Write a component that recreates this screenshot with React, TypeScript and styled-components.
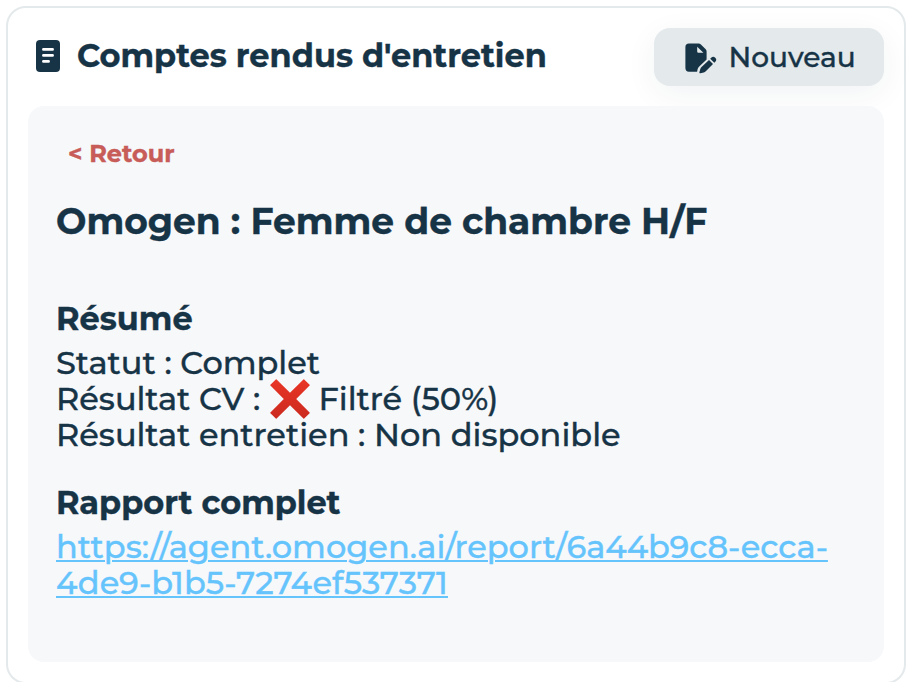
import React from "react";
import styled, { createGlobalStyle } from "styled-components";

const ink = "#173447";

const GlobalStyle = createGlobalStyle`
  *, *::before, *::after { box-sizing: border-box; }
  html, body { margin: 0; height: 100%; overflow: hidden; background: #fff; }
  body {
    font-family: Montserrat, Inter, "Liberation Sans", sans-serif;
    color: ${ink};
    -webkit-font-smoothing: antialiased;
    -webkit-text-stroke: 0.35px currentColor;
  }
`;

const Page = styled.main`
  padding: 6px 10px 0 6px;
`;

const Card = styled.section`
  height: 678px;
  padding: 20px;
  border: 2px solid #e4e9eb;
  border-radius: 20px;
  background: #fff;
  display: flex;
  flex-direction: column;
  gap: 20px;
`;

const Header = styled.header`
  display: flex;
  justify-content: space-between;
  height: 58px;
  padding-left: 8px;
`;

const TitleGroup = styled.div`
  display: flex;
  align-items: center;
  gap: 17px;
  height: 56px;
`;

const Title = styled.h1`
  margin: 0;
  font-size: 32px;
  line-height: 40px;
  font-weight: 700;
  white-space: nowrap;
`;

const NewButton = styled.button`
  display: flex;
  align-items: center;
  gap: 11.500px;
  width: 230px;
  height: 58px;
  padding: 0 0 0 31px;
  border: 0;
  border-radius: 16px;
  background: #e4e9eb;
  color: ${ink};
  font: 500 28px/34px Montserrat, Inter, sans-serif;
  box-shadow: 0 8px 32px rgba(23, 52, 71, 0.06);
  cursor: pointer;
`;

const Panel = styled.div`
  height: 556px;
  padding: 28px;
  border-radius: 16px;
  background: #f7f8fa;
`;

const BackButton = styled.button`
  display: block;
  height: 40px;
  padding: 0 12px;
  border: 0;
  background: none;
  color: #c75c58;
  font: 700 24px/40px Montserrat, Inter, sans-serif;
  cursor: pointer;
`;

const JobTitle = styled.h2`
  margin: 25px 0 58px;
  font-size: 36px;
  line-height: 44px;
  font-weight: 700;
  white-space: nowrap;
`;

const Section = styled.section`
  font-size: 32px;
  line-height: 36px;
  font-weight: 500;

  & + & { margin-top: 32px; }
`;

const SectionTitle = styled.h3`
  margin: 0 0 8px;
  font-size: 32px;
  line-height: 36px;
  font-weight: 700;
`;

const Line = styled.p`
  margin: 0;
  height: 36px;
  white-space: nowrap;
`;

const ReportLink = styled.a`
  color: #66c4fd;
  text-decoration: underline;
  text-decoration-thickness: 2px;
  text-underline-offset: 2px;
`;

const Cross = styled.svg`
  display: inline-block;
  width: 40px;
  height: 40px;
  margin: -10px 0 -10px 1px;
  vertical-align: 1px;
`;

function ReportIcon() {
  return (
    <svg width="24" height="32" viewBox="0 0 24 32" aria-hidden="true">
      <rect width="24" height="32" rx="4" fill={ink} />
      <path d="M7.4 9.4h9.2M7.4 15.4h9.2M7.4 21.4h5.2" stroke="#fff" strokeWidth="2.7" strokeLinecap="round" />
    </svg>
  );
}

function EditFileIcon() {
  return (
    <svg width="32" height="34" viewBox="0 -2.4 32 34" overflow="visible" aria-hidden="true">
      <path
        fill={ink}
        fillRule="evenodd"
        d="M4 1h9.6c.9 0 1.700.4 2.300 1l4.800 4.800c.6.600.9 1.400.9 2.200v8.200L14 24.300c-.8.800-1.200 1.500-1.400 2.500L12.100 29.300H4a3.600 3.600 0 0 1-3.600-3.600V4.600A3.600 3.600 0 0 1 4 1Z M12.200 4.300v4.800a1.200 1.200 0 0 0 1.200 1.200h5Z"
      />
      <path
        fill={ink}
        d="m24 17.500 4 4-7 7c-.7.700-1.400 1.200-2.300 1.500l-3.200.9c-.7.200-1.300-.4-1.100-1.100l.9-3.100c.2-.9.800-1.700 1.500-2.400ZM25.200 16.300l1-1a2.900 2.900 0 0 1 4.100 4.100l-1 1Z"
      />
    </svg>
  );
}

function CrossMark() {
  return (
    <Cross viewBox="0 0 40 40" role="img" aria-label="Refusé">
      <defs>
        <linearGradient id="cross-red" x1="0" y1="0" x2="0" y2="1">
          <stop offset="0" stopColor="#e93526" />
          <stop offset="1" stopColor="#cb2a1f" />
        </linearGradient>
      </defs>
      <path
        fill="url(#cross-red)"
        d="M.4 5.800 5.800.4q.4-.4.800 0L20 13.800 33.400.4q.4-.4.800 0l5.400 5.400q.4.400 0 .8L26.200 20l13.400 13.400q.4.400 0 .8l-5.400 5.400q-.4.400-.8 0L20 26.200 6.600 39.600q-.4.400-.8 0L.4 34.200q-.4-.4 0-.8L13.800 20 .4 6.600q-.4-.4 0-.8Z"
      />
    </Cross>
  );
}

export default function App() {
  return (
    <>
      <GlobalStyle />
      <Page>
        <Card>
          <Header>
            <TitleGroup>
              <ReportIcon />
              <Title>Comptes rendus d'entretien</Title>
            </TitleGroup>
            <NewButton>
              <EditFileIcon />
              Nouveau
            </NewButton>
          </Header>
          <Panel>
            <BackButton>&lt; Retour</BackButton>
            <JobTitle>Omogen : Femme de chambre H/F</JobTitle>
            <Section>
              <SectionTitle>Résumé</SectionTitle>
              <Line>Statut : Complet</Line>
              <Line>
                Résultat CV : <CrossMark /> Filtré (50%)
              </Line>
              <Line>Résultat entretien : Non disponible</Line>
            </Section>
            <Section>
              <SectionTitle>Rapport complet</SectionTitle>
              <ReportLink href="#">https://agent.omogen.ai/report/6a44b9c8-ecca-4de9-b1b5-7274ef537371</ReportLink>
            </Section>
          </Panel>
        </Card>
      </Page>
    </>
  );
}
